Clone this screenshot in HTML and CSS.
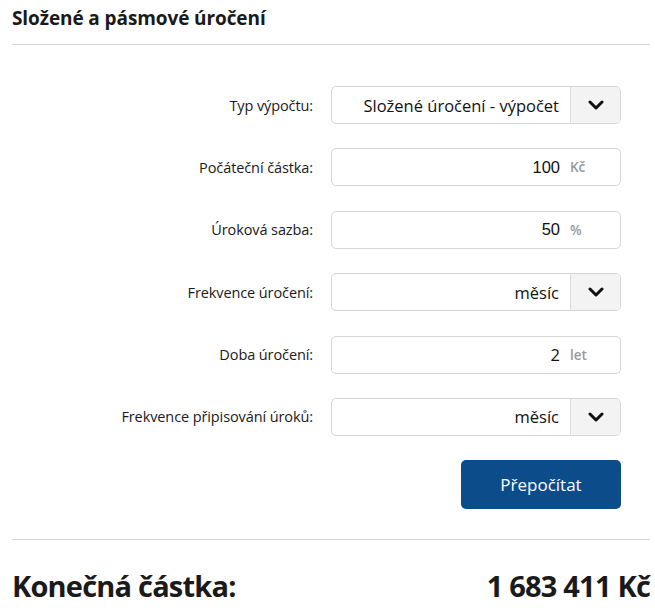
FILE: index.html
```html
<!DOCTYPE html>
<html lang="cs">
<head>
    <meta charset="UTF-8">
    <title>Složené a pásmové úročení</title>
    <link rel="stylesheet" href="styles.css">
</head>
<body>
    <div class="calc">
        <h2 class="calc-title">Složené a pásmové úročení</h2>

        <form class="calc-form">
            <label class="row-label">Typ výpočtu:</label>
            <div class="field select">
                <span class="field-value">Složené úročení - výpočet</span>
                <span class="select-btn">
                    <svg width="16" height="10" viewBox="0 0 16 10"><path d="M2 2l6 6 6-6" fill="none" stroke="#111" stroke-width="3" stroke-linecap="round" stroke-linejoin="round"/></svg>
                </span>
            </div>

            <label class="row-label">Počáteční částka:</label>
            <div class="field">
                <span class="field-value num">100</span>
                <span class="unit">Kč</span>
            </div>

            <label class="row-label">Úroková sazba:</label>
            <div class="field">
                <span class="field-value num">50</span>
                <span class="unit">%</span>
            </div>

            <label class="row-label">Frekvence úročení:</label>
            <div class="field select">
                <span class="field-value">měsíc</span>
                <span class="select-btn">
                    <svg width="16" height="10" viewBox="0 0 16 10"><path d="M2 2l6 6 6-6" fill="none" stroke="#111" stroke-width="3" stroke-linecap="round" stroke-linejoin="round"/></svg>
                </span>
            </div>

            <label class="row-label">Doba úročení:</label>
            <div class="field">
                <span class="field-value">2</span>
                <span class="unit">let</span>
            </div>

            <label class="row-label">Frekvence připisování úroků:</label>
            <div class="field select">
                <span class="field-value">měsíc</span>
                <span class="select-btn">
                    <svg width="16" height="10" viewBox="0 0 16 10"><path d="M2 2l6 6 6-6" fill="none" stroke="#111" stroke-width="3" stroke-linecap="round" stroke-linejoin="round"/></svg>
                </span>
            </div>

            <span></span>
            <div class="actions">
                <button type="button" class="btn">Přepočítat</button>
            </div>
        </form>

        <div class="result">
            <span>Konečná částka:</span>
            <span>1 683 411 Kč</span>
        </div>
    </div>
</body>
</html>
```

FILE: styles.css
```css
body {
    margin: 0;
    font-family: "Open Sans", "Noto Sans", sans-serif;
    color: #1a1a1a;
    background: #fff;
}
.calc {
    padding: 0 5px 0 12px;
}
.calc-title {
    margin: 0;
    padding: 5px 0 12px;
    font-size: 19px;
    font-weight: 700;
    line-height: 27px;
    letter-spacing: -0.1px;
    border-bottom: 1px solid #d8d8d8;
}
.calc-form {
    display: grid;
    grid-template-columns: 301px 290px;
    column-gap: 18px;
    row-gap: 24.4px;
    padding-top: 41px;
    align-items: center;
}
.row-label {
    text-align: right;
    font-size: 14.5px;
    letter-spacing: -0.1px;
    color: #1a1a1a;
}
.field {
    display: flex;
    align-items: center;
    height: 38px;
    box-sizing: border-box;
    border: 1px solid #d6d6d6;
    border-radius: 5px;
    overflow: hidden;
}
.field-value {
    flex: 1;
    text-align: right;
    font-size: 16.5px;
    color: #111;
    padding-right: 10px;
}
.field-value.num {
    font-family: "Liberation Sans", Arial, sans-serif;
}
.unit {
    width: 50px;
    font-size: 13.5px;
    color: #999;
    font-weight: 600;
}
.select .field-value {
    padding-right: 11px;
}
.select-btn {
    width: 49px;
    height: 100%;
    display: flex;
    align-items: center;
    justify-content: center;
    background: #f3f3f3;
    border-left: 1px solid #dcdcdc;
}
.actions {
    display: flex;
    justify-content: flex-end;
}
.btn {
    width: 160px;
    height: 49px;
    border: none;
    border-radius: 5px;
    background: #0d4c8b;
    color: #fff;
    font-family: inherit;
    font-size: 17px;
    cursor: pointer;
}
.result {
    display: flex;
    justify-content: space-between;
    align-items: baseline;
    margin-top: 30px;
    padding-top: 26px;
    border-top: 1px solid #d8d8d8;
    font-size: 29px;
    font-weight: 700;
    letter-spacing: -0.8px;
}
```
